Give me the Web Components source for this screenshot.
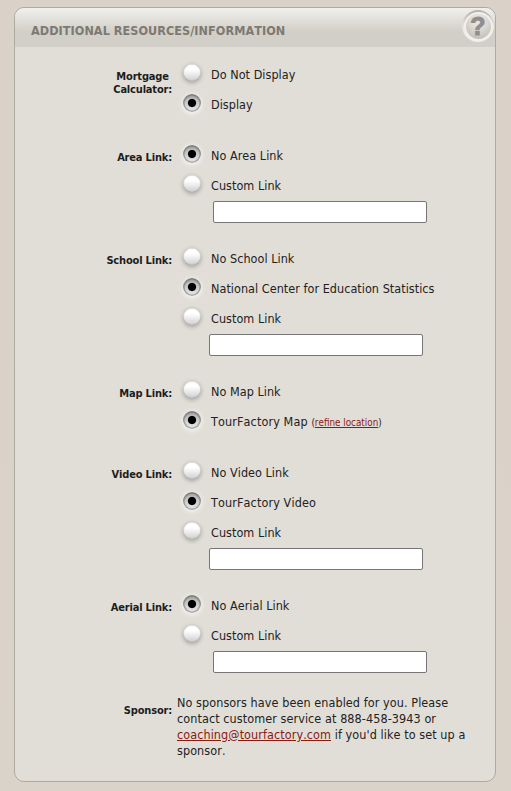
<!DOCTYPE html>
<html lang="en">
<head>
<meta charset="utf-8">
<title>Additional Resources/Information</title>
<style>
    body {
        margin: 0;
        min-height: 791px;
        box-sizing: border-box;
        padding: 7px 15px 9px 14px;
        background: linear-gradient(#dad2c9, #dad3c9);
        font-family: "DejaVu Sans Condensed", "DejaVu Sans", sans-serif;
        font-stretch: condensed;
        font-size: 12.5px;
        font-kerning: none;
        line-height: 16px;
        letter-spacing: 0.04px;
        color: #222;
    }

    a {
        color: #8b1a10;
    }

    .refine {
        font-size: 9.8px;
        letter-spacing: 0;
    }

    .tour {
        letter-spacing: 0.12px;
    }
</style>
</head>
<body>

<tf-panel>
    <span slot="title">ADDITIONAL RESOURCES/INFORMATION</span>
    <tf-help slot="help"></tf-help>

    <tf-field>
        <span slot="label">Mortgage&nbsp;<br>Calculator:</span>
        <tf-radio>Do Not Display</tf-radio>
        <tf-radio checked>Display</tf-radio>
    </tf-field>
    <tf-field>
        <span slot="label">Area Link:</span>
        <tf-radio checked>No Area Link</tf-radio>
        <tf-radio>Custom Link</tf-radio>
        <tf-input indent></tf-input>
    </tf-field>
    <tf-field>
        <span slot="label">School Link:</span>
        <tf-radio>No School Link</tf-radio>
        <tf-radio checked>National Center for Education Statistics</tf-radio>
        <tf-radio>Custom Link</tf-radio>
        <tf-input></tf-input>
    </tf-field>
    <tf-field>
        <span slot="label">Map Link:</span>
        <tf-radio>No Map Link</tf-radio>
        <tf-radio checked><span class="tour">TourFactory Map </span><span class="refine">(<a href="#">refine location</a>)</span></tf-radio>
    </tf-field>
    <tf-field>
        <span slot="label">Video Link:</span>
        <tf-radio>No Video Link</tf-radio>
        <tf-radio checked><span class="tour">TourFactory Video</span></tf-radio>
        <tf-radio>Custom Link</tf-radio>
        <tf-input></tf-input>
    </tf-field>
    <tf-field>
        <span slot="label">Aerial Link:</span>
        <tf-radio checked>No Aerial Link</tf-radio>
        <tf-radio>Custom Link</tf-radio>
        <tf-input indent></tf-input>
    </tf-field>
    <tf-field>
        <span slot="label">Sponsor:</span>
        <tf-note>No sponsors have been enabled for you. Please<br>contact customer service at 888-458-3943 or<br><a href="#">coaching@tourfactory.com</a> if you'd like to set up a<br>sponsor.</tf-note>
    </tf-field>
</tf-panel>

<script>
// Base: every element just clones its own html into the shadow root
class TfElement extends HTMLElement {
    constructor() {
        super();
        const template = document.createElement("template");
        template.innerHTML = this.constructor.html;
        this.attachShadow({mode: "open"});
        this.shadowRoot.appendChild(template.content.cloneNode(true));
    }
}

class TfPanel extends TfElement {
    static html = `<style>
        :host {
            display: block;
            box-sizing: border-box;
            height: 775px;
            border: 1px solid #adaaa1;
            border-radius: 10px;
            background-color: #e1ded7;
            overflow: hidden;
        }

        header {
            display: flex;
            align-items: center;
            justify-content: space-between;
            box-sizing: border-box;
            height: 39px;
            padding: 0 1px 0 16px;
            background: linear-gradient(#f1f0ed 0%, #d2cfc8 60%, #d2cfc8 100%);
        }

        .titulo {
            padding-top: 7px;
            font-size: 12.5px;
            font-weight: bold;
            color: #7d7973;
            white-space: nowrap;
            letter-spacing: 0.06px;
        }

        .campos {
            display: flex;
            flex-direction: column;
            gap: 21px;
            padding-top: 13px;
        }
    </style>
    <header>
        <div class="titulo"><slot name="title"></slot></div>
        <slot name="help"></slot>
    </header>
    <div class="campos"><slot></slot></div>`;
}

class TfHelp extends TfElement {
    static html = `<style>
        :host {
            display: flex;
            align-items: center;
            justify-content: center;
            box-sizing: border-box;
            width: 32px;
            height: 32px;
            margin-top: -3px;
            border-radius: 50%;
            background: linear-gradient(#b4b1ac, #e6e4e1 50%, #efeeeb 85%);
        }

        .bola {
            display: flex;
            align-items: center;
            justify-content: center;
            box-sizing: border-box;
            width: 29px;
            height: 29px;
            border: 2px solid #f1f0ee;
            border-radius: 50%;
            background: radial-gradient(circle at 50% 30%, #e6e3df 20%, #c9c5bd 65%, #a39d90 100%) border-box;
        }

        span {
            font: 900 25px/27px "Liberation Sans", sans-serif;
            letter-spacing: 0;
            color: #8f8f8f;
            -webkit-text-stroke: 1px #8f8f8f;
        }
    </style>
    <div class="bola"><span>?</span></div>`;
}

class TfField extends TfElement {
    static html = `<style>
        :host {
            display: grid;
            grid-template-columns: 157px 1fr;
        }

        .etiqueta {
            padding-top: 10px;
            font-size: 11px;
            font-weight: bold;
            line-height: 13px;
            letter-spacing: -0.18px;
            text-align: right;
            white-space: nowrap;
            color: #1d1d1d;
        }

        .opciones {
            display: flex;
            flex-direction: column;
            align-items: flex-start;
        }
    </style>
    <div class="etiqueta"><slot name="label"></slot></div>
    <div class="opciones"><slot></slot></div>`;
}

class TfRadio extends TfElement {
    static html = `<style>
        :host {
            display: block;
        }

        label {
            display: flex;
            align-items: center;
            gap: 10px;
            height: 30px;
            padding-left: 11px;
            white-space: nowrap;
        }

        input {
            appearance: none;
            width: 18px;
            height: 18px;
            margin: 0 0 5px;
            border-radius: 50%;
            background: linear-gradient(#fff 30%, #f1f1f1 50%, #cfcfcf 92%);
            box-shadow: inset 0 0 1px 0.5px #c4c4c2, inset 0 -1px 1px #999, 0 1px 4px rgba(0, 0, 0, 0.28);
        }

        input:checked {
            background:
                radial-gradient(circle at 50% 50%, #000 3.6px, transparent 4.6px),
                linear-gradient(#aaa, #eee);
            box-shadow: inset 0 0 1px 1.5px rgba(115, 115, 115, 0.6), inset 0 2px 2px rgba(0, 0, 0, 0.22), 0 1px 4px 1px #f5f4f0;
        }
    </style>
    <label><input type="radio"><span><slot></slot></span></label>`;

    connectedCallback() {
        this.shadowRoot.querySelector("input").checked = this.hasAttribute("checked");
    }
}

class TfInput extends TfElement {
    static html = `<style>
        :host {
            display: block;
            margin-left: 37px;
        }

        :host([indent]) {
            margin-left: 41px;
        }

        input {
            display: block;
            box-sizing: border-box;
            width: 214px;
            height: 22px;
            border: 1px solid #767676;
            border-radius: 2px;
            background-color: #fff;
        }
    </style>
    <input type="text">`;
}

class TfNote extends TfElement {
    static html = `<style>
        :host {
            display: block;
            padding-left: 5px;
            margin-top: 1px;
            letter-spacing: 0.08px;
            white-space: nowrap;
        }
    </style>
    <slot></slot>`;
}

customElements.define("tf-panel", TfPanel);
customElements.define("tf-help", TfHelp);
customElements.define("tf-field", TfField);
customElements.define("tf-radio", TfRadio);
customElements.define("tf-input", TfInput);
customElements.define("tf-note", TfNote);
</script>
</body>
</html>
